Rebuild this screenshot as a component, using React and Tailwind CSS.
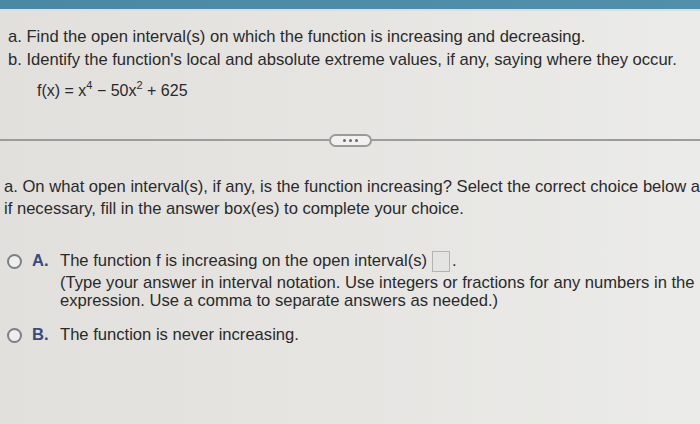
import React from "react";

const font = { fontFamily: '"Liberation Sans", Arial, sans-serif' };

function Radio() {
  return (
    <span className="inline-block w-[15px] h-[15px] rounded-full border-[2px] border-[#7d8088] bg-[#eeeeec] shrink-0" />
  );
}

export default function App() {
  return (
    <div
      className="w-[700px] h-[424px] overflow-hidden bg-gradient-to-r from-[#e1e0dd] via-[#e6e5e2] to-[#ebebe9] text-[#2a2a2a] relative"
      style={font}
    >
      <div className="h-[9px] bg-gradient-to-r from-[#4a88a4] to-[#5190ab]" />
      <div className="h-[2px] bg-[#d9dedf]" />

      <div className="pl-[8px] pt-[14px] text-[16.6px] leading-[23px] whitespace-nowrap">
        <div>a. Find the open interval(s) on which the function is increasing and decreasing.</div>
        <div>b. Identify the function's local and absolute extreme values, if any, saying where they occur.</div>
      </div>

      <div className="pl-[37px] mt-[9px] h-[22px] text-[16px] leading-[22px] whitespace-nowrap">
        f(x) = x<sup className="text-[11px] top-[-7px]">4</sup> − 50x
        <sup className="text-[11px] top-[-7px]">2</sup> + 625
      </div>

      <div className="mt-[31px] flex items-center h-[14px]">
        <div className="flex-1 h-[2px] bg-[#9c9c9a]" />
        <div className="w-[43px] h-[13px] rounded-full border-[2px] border-[#9a9a98] bg-[#f1f1ef] flex items-center justify-center gap-[3px]">
          <span className="w-[3px] h-[3px] rounded-full bg-[#6a6a6a]" />
          <span className="w-[3px] h-[3px] rounded-full bg-[#6a6a6a]" />
          <span className="w-[3px] h-[3px] rounded-full bg-[#6a6a6a]" />
        </div>
        <div className="flex-1 h-[2px] bg-[#9c9c9a]" />
      </div>

      <div className="pl-[4px] mt-[29px] text-[16.6px] leading-[22px] whitespace-nowrap">
        <div>a. On what open interval(s), if any, is the function increasing? Select the correct choice below and,</div>
        <div>if necessary, fill in the answer box(es) to complete your choice.</div>
      </div>

      <div className="mt-[29px] pl-[7px] text-[16.6px] whitespace-nowrap">
        <div className="flex items-start">
          <div className="flex items-center h-[24px] w-[53px] gap-[10px]">
            <Radio />
            <span className="font-bold text-[#3b4a7c]">A.</span>
          </div>
          <div>
            <div className="flex items-center h-[24px]">
              <span>The function f is increasing on the open interval(s)</span>
              <span className="ml-[5px] inline-block w-[18px] h-[21px] border border-[#b3b3b3] bg-[#e4e4e2]" />
              <span className="ml-[2px]">.</span>
            </div>
            <div className="leading-[18px] mt-[1px]">
              <div>(Type your answer in interval notation. Use integers or fractions for any numbers in the</div>
              <div>expression. Use a comma to separate answers as needed.)</div>
            </div>
          </div>
        </div>
        <div className="flex items-center mt-[13px] h-[24px]">
          <div className="flex items-center w-[53px] gap-[10px]">
            <Radio />
            <span className="font-bold text-[#3b4a7c]">B.</span>
          </div>
          <span>The function is never increasing.</span>
        </div>
      </div>
    </div>
  );
}
